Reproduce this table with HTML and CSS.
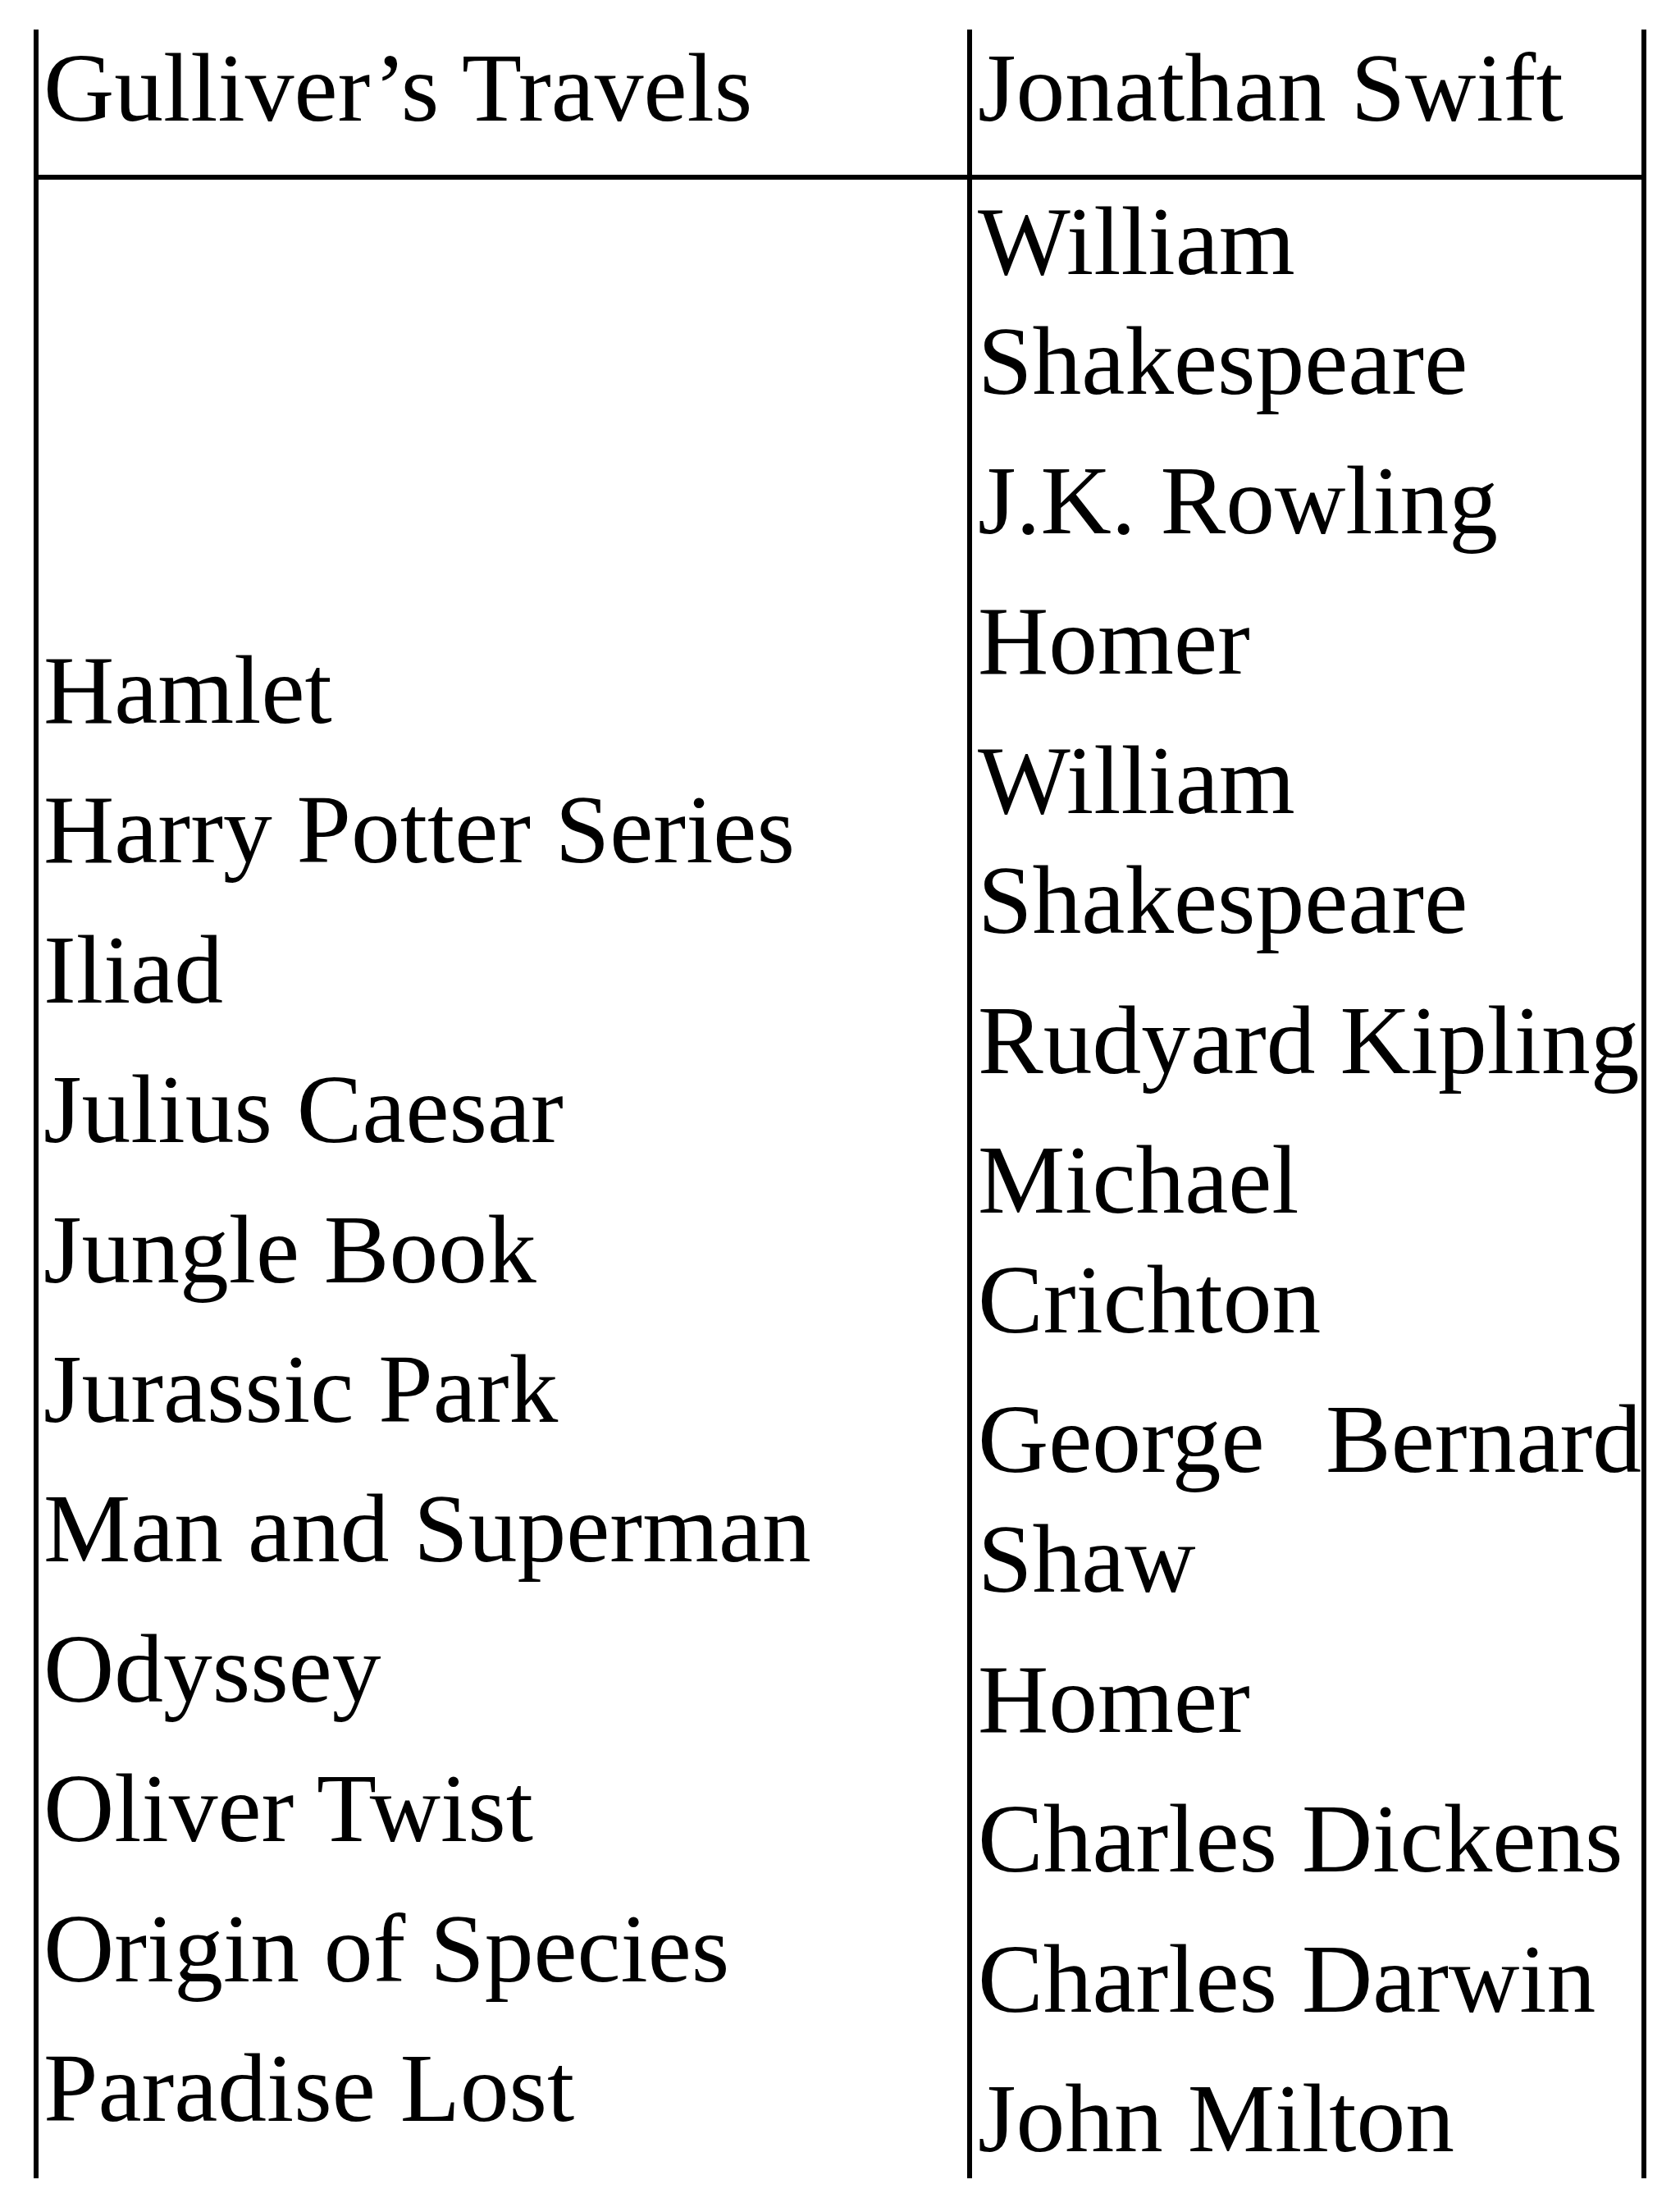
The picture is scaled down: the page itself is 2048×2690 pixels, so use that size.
FILE: index.html
```html
<!DOCTYPE html>
<html lang="en">
<head>
<meta charset="utf-8">
<title>Books and Authors</title>
<link rel="stylesheet" href="styles.css">
</head>
<body>
<div class="table">
  <div class="cell head left"><p>Gulliver’s Travels</p></div>
  <div class="cell head right"><p>Jonathan Swift</p></div>
  <div class="cell body left">
    <p>Hamlet</p>
    <p>Harry Potter Series</p>
    <p>Iliad</p>
    <p>Julius Caesar</p>
    <p>Jungle Book</p>
    <p>Jurassic Park</p>
    <p>Man and Superman</p>
    <p>Odyssey</p>
    <p>Oliver Twist</p>
    <p>Origin of Species</p>
    <p>Paradise Lost</p>
  </div>
  <div class="cell body right">
    <p>William Shakespeare</p>
    <p>J.K. Rowling</p>
    <p>Homer</p>
    <p>William Shakespeare</p>
    <p>Rudyard Kipling</p>
    <p>Michael Crichton</p>
    <p>George Bernard Shaw</p>
    <p>Homer</p>
    <p>Charles Dickens</p>
    <p>Charles Darwin</p>
    <p>John Milton</p>
  </div>
</div>
</body>
</html>
```
FILE: styles.css
```css
html, body {
  margin: 0;
  padding: 0;
  background: #ffffff;
}

body {
  font-family: "Liberation Serif", "Times New Roman", serif;
  font-size: 119.5px;
  line-height: 146px;
  color: #000000;
}

.table {
  margin: 36px 0 0 41px;
  width: 1966px;
  box-sizing: border-box;
  border-left: 6px solid #000;
  border-right: 6px solid #000;
  display: grid;
  grid-template-columns: 1132px 822px;
}

.cell {
  box-sizing: border-box;
}

.cell p {
  margin: 0;
}

.head {
  height: 183px;
  border-bottom: 6px solid #000;
  overflow: visible;
}

.head p {
  margin-top: -2px;
  white-space: nowrap;
}

.left {
  padding-left: 6px;
}

.right {
  border-left: 6px solid #000;
  padding-left: 7px;
  padding-right: 0;
}

.body.left {
  display: flex;
  flex-direction: column;
  justify-content: flex-end;
  padding-bottom: 37px;
}

.body.left p + p {
  margin-top: 24.4px;
}

.body.right {
  padding-top: 2px;
  text-align: justify;
}

.body.right p + p {
  margin-top: 24.4px;
}
```
